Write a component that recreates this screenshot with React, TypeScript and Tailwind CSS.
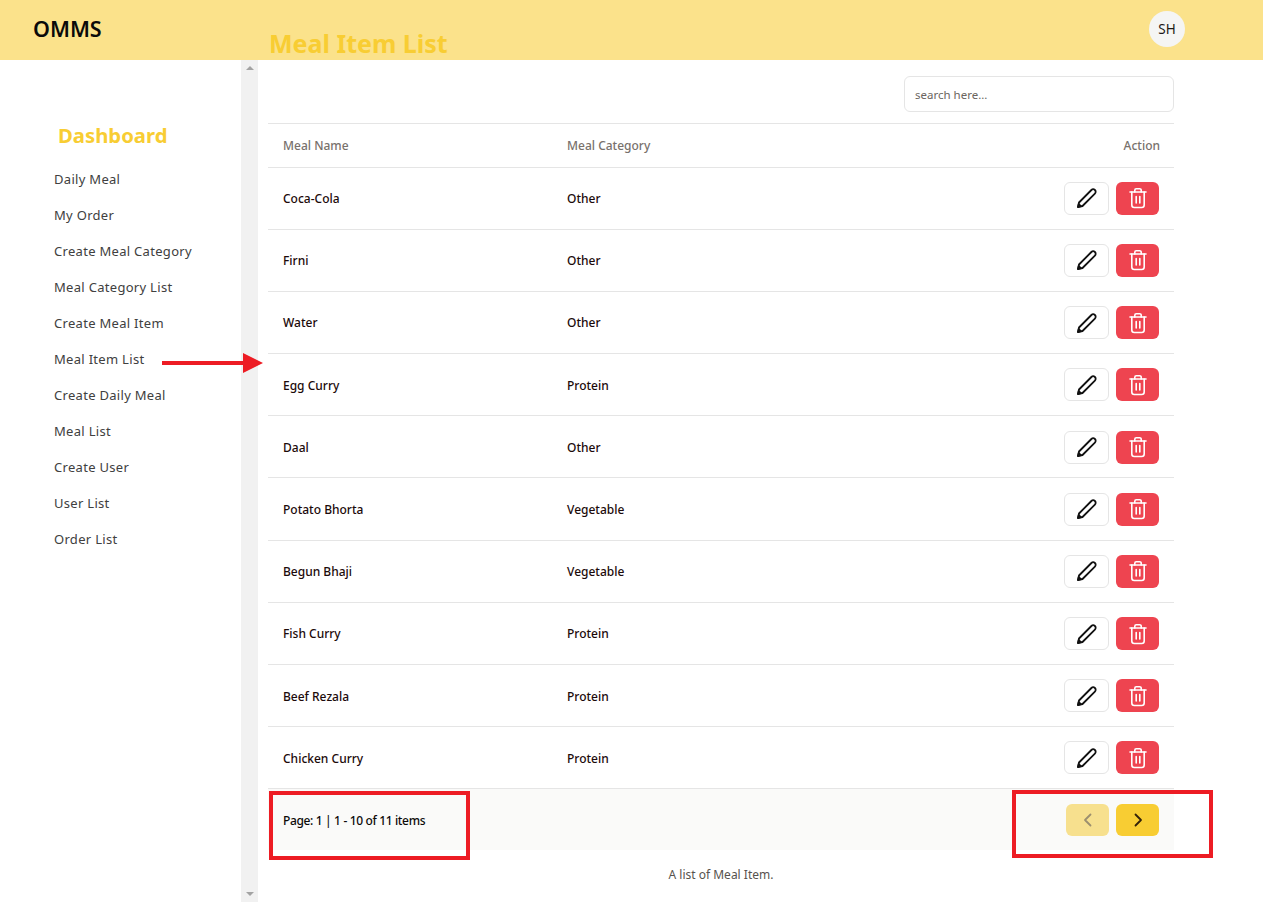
const navItems = [
  "Daily Meal",
  "My Order",
  "Create Meal Category",
  "Meal Category List",
  "Create Meal Item",
  "Meal Item List",
  "Create Daily Meal",
  "Meal List",
  "Create User",
  "User List",
  "Order List",
];

const meals = [
  ["Coca-Cola", "Other"],
  ["Firni", "Other"],
  ["Water", "Other"],
  ["Egg Curry", "Protein"],
  ["Daal", "Other"],
  ["Potato Bhorta", "Vegetable"],
  ["Begun Bhaji", "Vegetable"],
  ["Fish Curry", "Protein"],
  ["Beef Rezala", "Protein"],
  ["Chicken Curry", "Protein"],
];

function PencilIcon() {
  return (
    <svg width="22" height="22" viewBox="0 0 22 22" fill="none" stroke="#111" strokeWidth="1.800" strokeLinejoin="round" strokeLinecap="round">
      <path d="M2 20 3 15.500 15.400 3a2.500 2.500 0 0 1 3.500 0a2.500 2.500 0 0 1 0 3.600L6.500 19z" />
      <path d="M2 20 4.800 19.200 2.800 17z" fill="#111" />
    </svg>
  );
}

function TrashIcon() {
  return (
    <svg width="20" height="22" viewBox="0 0 20 22" fill="none" stroke="#fff" strokeWidth="1.600" strokeLinecap="round" strokeLinejoin="round">
      <path d="M2 5h16" />
      <path d="M6.800 5V3.200A1.500 1.500 0 0 1 8.300 1.700h3.400a1.500 1.500 0 0 1 1.500 1.500V5" />
      <path d="M3.800 5v13a2.500 2.500 0 0 0 2.500 2.500h7.400a2.500 2.500 0 0 0 2.500-2.500V5" />
      <path d="M8.200 9.500v6.500M11.800 9.500v6.500" />
    </svg>
  );
}

function Scrollbar() {
  return (
    <div className="w-[17px] shrink-0 bg-[#f1f1f1] flex flex-col justify-between items-center py-[6px]">
      <div className="w-0 h-0 border-x-[4px] border-x-transparent border-b-[4px] border-b-[#a3a3a3]" />
      <div className="w-0 h-0 border-x-[4px] border-x-transparent border-t-[4px] border-t-[#a3a3a3]" />
    </div>
  );
}

export default function App() {
  return (
    <div className="relative h-screen overflow-hidden flex flex-col bg-white font-['Noto_Sans',sans-serif]">
      <header className="h-[60px] shrink-0 bg-[#fbe28b] flex">
        <div className="w-[269px] shrink-0 pl-[33px] pt-[12px] text-[21.500px] leading-[34px] font-semibold text-[#0a0a0a]">
          OMMS
        </div>
        <h1 className="self-end text-[25px] leading-[36px] -mb-[1px] font-bold text-[#f8cd33]">Meal Item List</h1>
        <div className="ml-auto mr-[78px] mt-[11px] w-[36px] h-[36px] rounded-full bg-[#f5f5f4] flex items-center justify-center text-[13.500px] text-[#1c1917]">
          SH
        </div>
      </header>

      <div className="flex-1 flex min-h-0">
        <aside className="w-[241px] shrink-0 pl-[54px] pt-[58px]">
          <h2 className="pl-[4px] text-[20.300px] leading-[34px] font-bold text-[#f8cd33]">Dashboard</h2>
          <nav className="mt-[10px] flex flex-col">
            {navItems.map((item) => (
              <a key={item} className="h-[36px] flex items-center text-[13px] tracking-[0.3px] text-[#404040]">
                {item}
              </a>
            ))}
          </nav>
        </aside>
        <Scrollbar />

        <main className="w-[906px] ml-[10px] shrink-0 flex flex-col">
          <div className="flex justify-end pt-[16px] pb-[11px] border-b border-[#e5e5e5]">
            <input
              placeholder="search here..."
              className="w-[270px] h-[36px] px-[10px] border border-[#e5e5e5] rounded-[6px] text-[11.500px] outline-none placeholder:text-[#6b6560]"
            />
          </div>
          <div className="h-[44px] -mb-[0.6px] pl-[15px] pr-[14px] grid grid-cols-[284px_1fr_auto] items-center border-b border-[#e5e5e5] text-[12px] font-medium text-[#78716c]">
            <span>Meal Name</span>
            <span>Meal Category</span>
            <span>Action</span>
          </div>
          {meals.map(([name, category]) => (
            <div
              key={name}
              className="h-[62.200px] px-[15px] grid grid-cols-[284px_1fr_auto] items-center border-b border-[#e5e5e5] text-[12px] font-medium text-[#1c0a0a]"
            >
              <span className="pt-[2px]">{name}</span>
              <span className="pt-[2px]">{category}</span>
              <div className="flex gap-[7px] pt-[0.500px]">
                <button className="w-[45px] h-[33px] rounded-[6px] border border-[#e5e5e5] bg-white flex items-center justify-center">
                  <PencilIcon />
                </button>
                <button className="w-[43px] h-[33px] rounded-[6px] bg-[#ee4450] flex items-center justify-center">
                  <TrashIcon />
                </button>
              </div>
            </div>
          ))}
          <div className="h-[60.600px] px-[15px] bg-[#fafaf9] flex items-center justify-between text-[12px] font-medium text-[#0c0a09]">
            <span className="tracking-[-0.350px] pt-[3px]">Page: 1 | 1 - 10 of 11 items</span>
            <div className="flex gap-[7px]">
              <button className="w-[43px] h-[32px] rounded-[6px] bg-[#f7e08e] flex items-center justify-center">
                <svg width="16" height="16" viewBox="0 0 16 16" fill="none" stroke="#9c8f6f" strokeWidth="1.800" strokeLinecap="round" strokeLinejoin="round">
                  <path d="M10.500 2.500 5 8l5.500 5.500" />
                </svg>
              </button>
              <button className="w-[43px] h-[32px] rounded-[6px] bg-[#f8cd33] flex items-center justify-center">
                <svg width="16" height="16" viewBox="0 0 16 16" fill="none" stroke="#33220a" strokeWidth="1.800" strokeLinecap="round" strokeLinejoin="round">
                  <path d="M5.500 2.500 11 8l-5.500 5.500" />
                </svg>
              </button>
            </div>
          </div>
          <p className="mt-[16px] text-center text-[12px] text-[#57534e]">A list of Meal Item.</p>
        </main>
        <div className="flex-1" />
      </div>

      {/* red annotations drawn over the screenshot */}
      <svg className="absolute left-[160px] top-[350px]" width="106" height="26" viewBox="0 0 106 26">
        <path d="M2 13h82" stroke="#ed1c24" strokeWidth="4" />
        <path d="M83 3l20 10-20 10z" fill="#ed1c24" />
      </svg>
      <div className="absolute left-[269px] top-[791px] w-[201px] h-[69px] border-[4px] border-[#ed1c24]" />
      <div className="absolute left-[1012px] top-[790px] w-[201px] h-[68px] border-[4px] border-[#ed1c24]" />
    </div>
  );
}
